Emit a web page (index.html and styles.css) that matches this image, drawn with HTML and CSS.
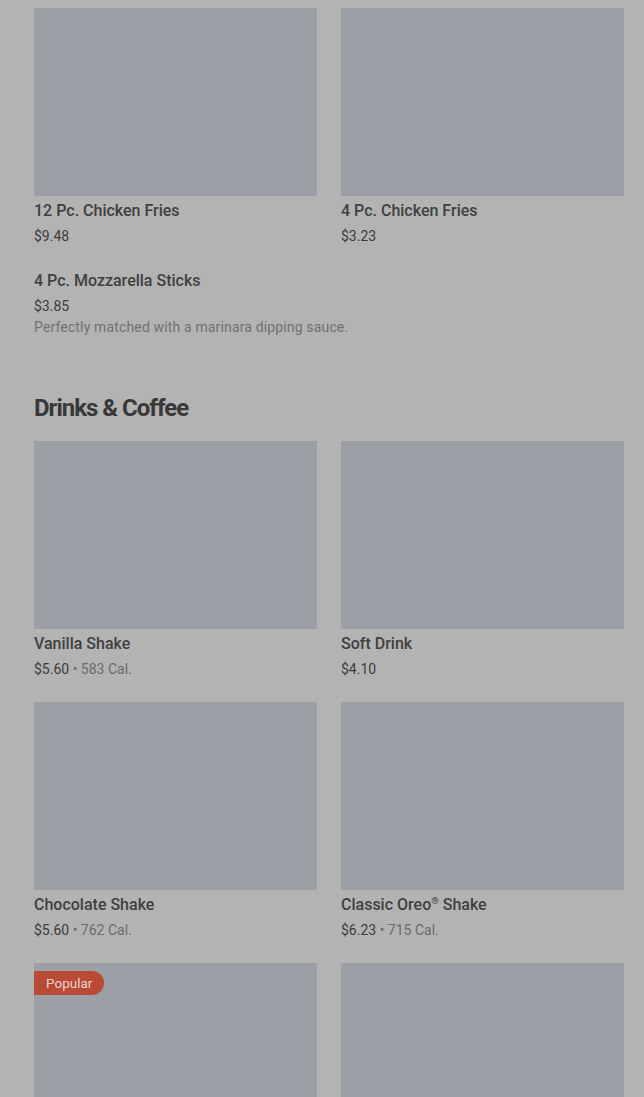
FILE: index.html
```html
<!DOCTYPE html>
<html lang="en">
<head>
    <meta charset="UTF-8">
    <meta name="viewport" content="width=device-width, initial-scale=1.0">
    <title>Menu</title>
    <link rel="stylesheet" href="styles.css">
</head>
<body>
    <div class="menu">
        <section class="section">
            <div class="grid">
                <div class="item">
                    <div class="thumb"></div>
                    <div class="name">12 Pc. Chicken Fries</div>
                    <div class="meta">$9.48</div>
                </div>
                <div class="item">
                    <div class="thumb"></div>
                    <div class="name">4 Pc. Chicken Fries</div>
                    <div class="meta">$3.23</div>
                </div>
                <div class="item wide">
                    <div class="name">4 Pc. Mozzarella Sticks</div>
                    <div class="meta">$3.85</div>
                    <div class="desc">Perfectly matched with a marinara dipping sauce.</div>
                </div>
            </div>
        </section>

        <section class="section">
            <h2>Drinks &amp; Coffee</h2>
            <div class="grid">
                <div class="item">
                    <div class="thumb"></div>
                    <div class="name">Vanilla Shake</div>
                    <div class="meta">$5.60 <span class="cal">• 583 Cal.</span></div>
                </div>
                <div class="item">
                    <div class="thumb"></div>
                    <div class="name">Soft Drink</div>
                    <div class="meta">$4.10</div>
                </div>
                <div class="item">
                    <div class="thumb"></div>
                    <div class="name">Chocolate Shake</div>
                    <div class="meta">$5.60 <span class="cal">• 762 Cal.</span></div>
                </div>
                <div class="item">
                    <div class="thumb"></div>
                    <div class="name">Classic Oreo<sup class="reg">®</sup> Shake</div>
                    <div class="meta">$6.23 <span class="cal">• 715 Cal.</span></div>
                </div>
                <div class="item">
                    <div class="thumb">
                        <span class="badge">Popular</span>
                    </div>
                </div>
                <div class="item">
                    <div class="thumb"></div>
                </div>
            </div>
        </section>
    </div>
</body>
</html>
```

FILE: styles.css
```css
body {
    margin: 0;
    padding: 0;
    background-color: #b3b3b3;
    font-family: Roboto, "Liberation Sans", sans-serif;
    color: #3a3a3a;
    overflow: hidden;
}
.menu {
    padding: 8px 20px 0 34px;
}
.section + .section {
    margin-top: 55px;
}
.section h2 {
    margin: 0 0 17px;
    font-size: 24px;
    line-height: 32px;
    font-weight: 700;
    letter-spacing: -1px;
    color: #383838;
}
.grid {
    display: grid;
    grid-template-columns: 1fr 1fr;
    column-gap: 24px;
    row-gap: 23px;
}
.item.wide {
    grid-column: 1 / -1;
}
.thumb {
    position: relative;
    height: 188px;
    background-color: #9d9fa6;
    margin-bottom: 3px;
}
.name {
    font-size: 16px;
    line-height: 24px;
    font-weight: 500;
    color: #404040;
}
.reg {
    font-size: 0.6em;
    line-height: 0;
}
.meta {
    margin-top: 3px;
    font-size: 14px;
    line-height: 20px;
    color: #3c3c3c;
}
.cal {
    color: #6b6b6b;
}
.desc {
    margin-top: 1px;
    font-size: 14px;
    line-height: 20px;
    letter-spacing: 0.15px;
    color: #707070;
}
.badge {
    position: absolute;
    top: 8px;
    left: 0;
    height: 24px;
    line-height: 24px;
    padding: 0 12px;
    font-size: 13.5px;
    color: #ecd3cd;
    background-color: #b84a36;
    border-radius: 0 12px 12px 0;
}
```
